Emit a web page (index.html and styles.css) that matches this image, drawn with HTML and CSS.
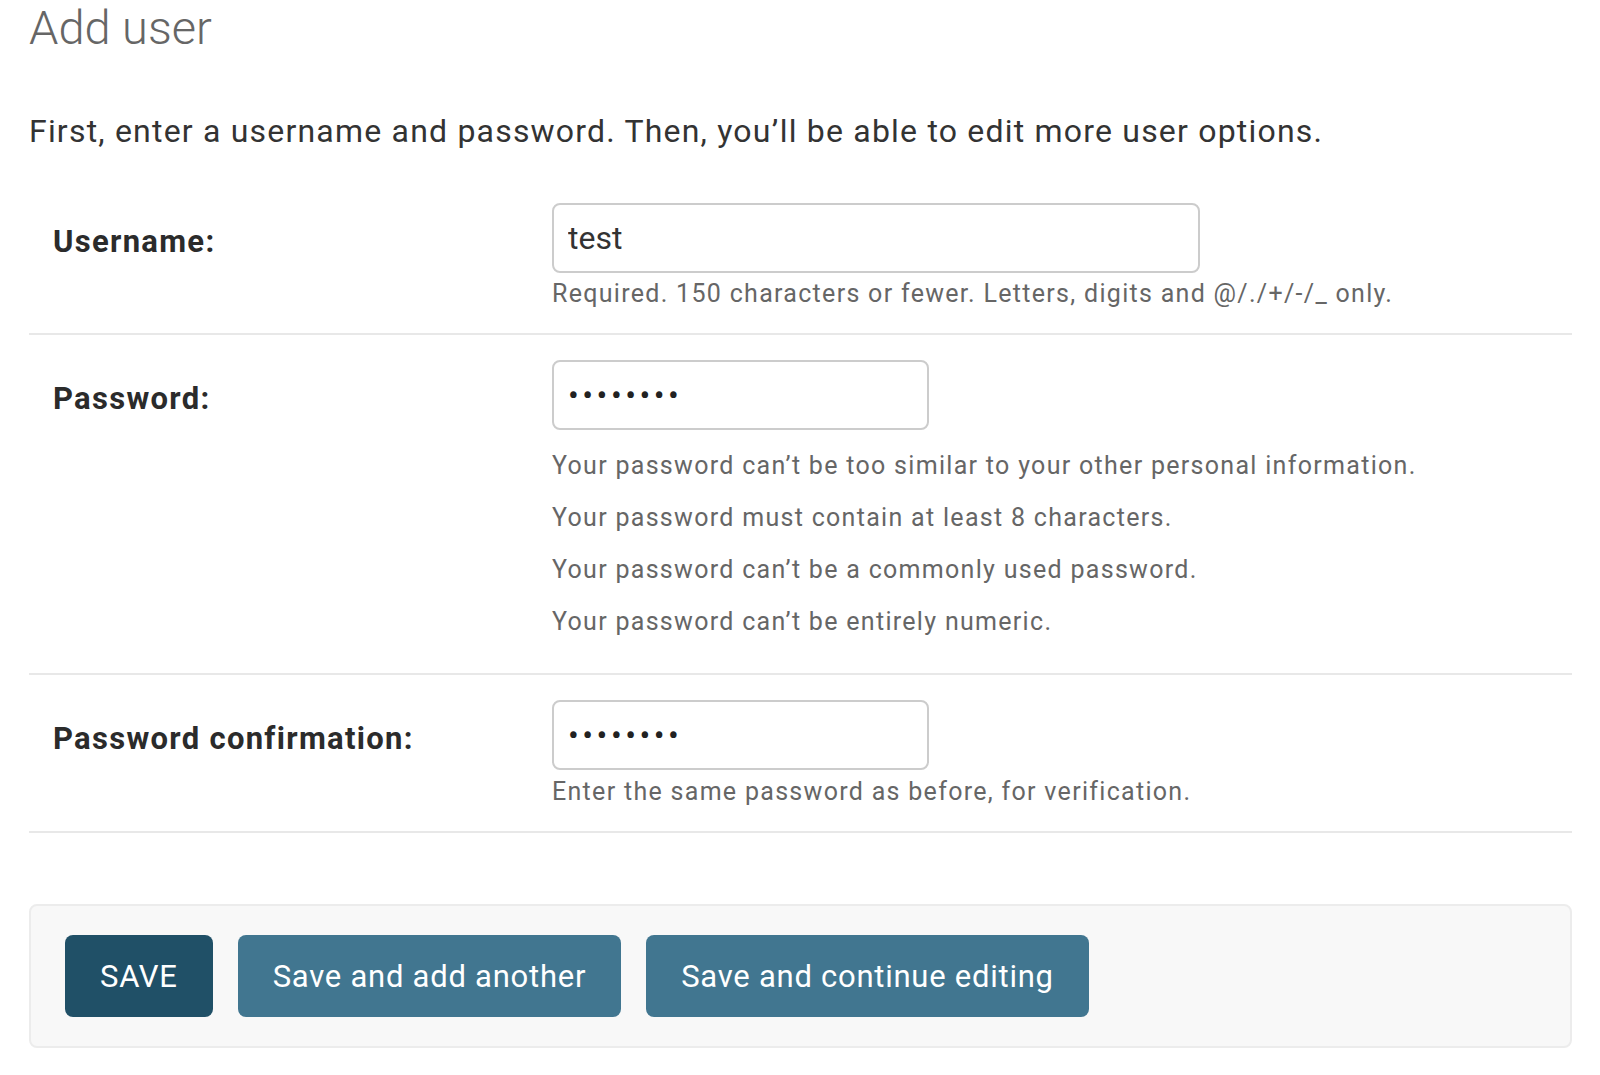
FILE: index.html
```html
<!DOCTYPE html>
<html lang="en">
<head>
<meta charset="utf-8">
<title>Add user</title>
<link rel="stylesheet" href="styles.css">
</head>
<body>
<div class="page">
  <h1 class="title">Add user</h1>
  <p class="intro">First, enter a username and password. Then, you’ll be able to edit more user options.</p>
  <div class="module">
    <div class="form-row">
      <label class="label" for="id_username">Username:</label>
      <div class="control">
        <input class="input input-wide" id="id_username" type="text" value="test">
        <div class="help">Required. 150 characters or fewer. Letters, digits and @/./+/-/_ only.</div>
      </div>
    </div>
    <div class="form-row">
      <label class="label" for="id_password1">Password:</label>
      <div class="control">
        <input class="input input-short input-secret" id="id_password1" type="password" value="abcdefgh">
        <ul class="help-list">
          <li>Your password can’t be too similar to your other personal information.</li>
          <li>Your password must contain at least 8 characters.</li>
          <li>Your password can’t be a commonly used password.</li>
          <li>Your password can’t be entirely numeric.</li>
        </ul>
      </div>
    </div>
    <div class="form-row">
      <label class="label" for="id_password2">Password confirmation:</label>
      <div class="control">
        <input class="input input-short input-secret" id="id_password2" type="password" value="abcdefgh">
        <div class="help help-last">Enter the same password as before, for verification.</div>
      </div>
    </div>
  </div>
  <div class="submit-row">
    <button class="btn btn-default" type="button">SAVE</button>
    <button class="btn" type="button">Save and add another</button>
    <button class="btn" type="button">Save and continue editing</button>
  </div>
</div>
</body>
</html>
```
FILE: styles.css
```css
html, body {
  margin: 0;
  padding: 0;
  background: #ffffff;
}

body {
  font-family: Roboto, "Liberation Sans", Arial, sans-serif;
  color: #333333;
}

.page {
  padding: 0 28px 0 29px;
}

.title {
  margin: 0;
  font-size: 47px;
  line-height: 56px;
  font-weight: 300;
  color: #666666;
}

.intro {
  margin: 55px 0 0;
  font-size: 32px;
  line-height: 40px;
  letter-spacing: 1.2px;
  color: #333333;
}

.module {
  margin-top: 27px;
}

.form-row {
  display: flex;
  padding: 25px 0 21px;
  border-bottom: 2px solid #e8e8e8;
}

.label {
  flex: 0 0 499px;
  padding: 4px 0 0 24px;
  font-size: 31px;
  line-height: 70px;
  font-weight: 700;
  letter-spacing: 1.3px;
  color: #2b2b2b;
}

.control {
  display: flex;
  flex-direction: column;
  align-items: flex-start;
}

.input {
  box-sizing: border-box;
  height: 70px;
  padding: 0 14px;
  border: 2px solid #cccccc;
  border-radius: 8px;
  font-family: Roboto, "Liberation Sans", Arial, sans-serif;
  font-size: 32px;
  color: #333333;
  background: #ffffff;
  outline: none;
}

.input-secret {
  letter-spacing: 3.5px;
  color: #222222;
}

.input-wide {
  width: 648px;
}

.input-short {
  width: 377px;
}

.help {
  margin-top: 3px;
  font-size: 25px;
  line-height: 36px;
  letter-spacing: 1.3px;
  color: #666666;
}

.help-last {
  margin-top: 4px;
}

.help-list {
  margin: 10px 0 0;
  padding: 0 0 4px;
  list-style: none;
  font-size: 25px;
  line-height: 52px;
  letter-spacing: 1.3px;
  color: #666666;
}

.submit-row {
  display: flex;
  gap: 25px;
  margin-top: 71px;
  padding: 29px 34px;
  background: #f8f8f8;
  border: 2px solid #ececec;
  border-radius: 8px;
}

.btn {
  height: 82px;
  padding: 0 35px;
  border: none;
  border-radius: 8px;
  background: #417690;
  color: #ffffff;
  font-family: Roboto, "Liberation Sans", Arial, sans-serif;
  font-size: 31px;
  letter-spacing: 0.75px;
  cursor: pointer;
}

.btn-default {
  background: #205067;
}
```
